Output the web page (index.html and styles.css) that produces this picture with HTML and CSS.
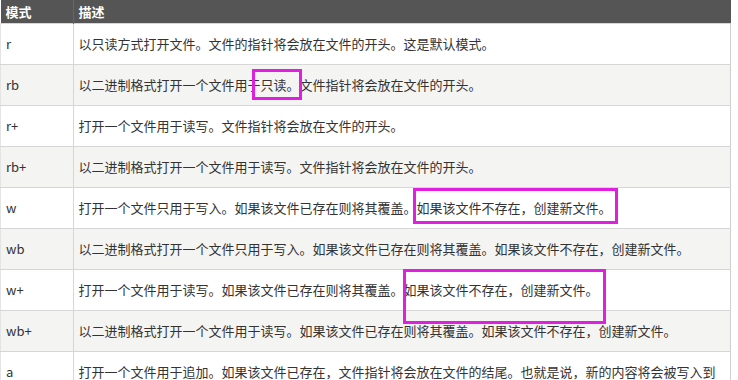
FILE: index.html
```html
<!DOCTYPE html>
<html lang="zh">
<head>
<meta charset="utf-8">
<link rel="stylesheet" href="styles.css">
</head>
<body>
<div class="wrap">
  <table class="modes">
    <thead>
      <tr><th class="c1">模式</th><th>描述</th></tr>
    </thead>
    <tbody>
      <tr><td class="c1">r</td><td>以只读方式打开文件。文件的指针将会放在文件的开头。这是默认模式。</td></tr>
      <tr class="alt"><td class="c1">rb</td><td>以二进制格式打开一个文件用于只读。文件指针将会放在文件的开头。</td></tr>
      <tr><td class="c1">r+</td><td>打开一个文件用于读写。文件指针将会放在文件的开头。</td></tr>
      <tr class="alt"><td class="c1">rb+</td><td>以二进制格式打开一个文件用于读写。文件指针将会放在文件的开头。</td></tr>
      <tr><td class="c1">w</td><td>打开一个文件只用于写入。如果该文件已存在则将其覆盖。如果该文件不存在，创建新文件。</td></tr>
      <tr class="alt"><td class="c1">wb</td><td>以二进制格式打开一个文件只用于写入。如果该文件已存在则将其覆盖。如果该文件不存在，创建新文件。</td></tr>
      <tr><td class="c1">w+</td><td>打开一个文件用于读写。如果该文件已存在则将其覆盖。如果该文件不存在，创建新文件。</td></tr>
      <tr class="alt"><td class="c1">wb+</td><td>以二进制格式打开一个文件用于读写。如果该文件已存在则将其覆盖。如果该文件不存在，创建新文件。</td></tr>
      <tr><td class="c1">a</td><td>打开一个文件用于追加。如果该文件已存在，文件指针将会放在文件的结尾。也就是说，新的内容将会被写入到</td></tr>
    </tbody>
  </table>
  <div class="mark m1"></div>
  <div class="mark m2"></div>
  <div class="mark m3"></div>
</div>
</body>
</html>
```
FILE: styles.css
```css
html, body {
  margin: 0;
  padding: 0;
  background: #fff;
}
body {
  font-family: "Noto Sans CJK SC", "Noto Sans", sans-serif;
  font-size: 13px;
  color: #333;
  overflow: hidden;
}
.wrap {
  position: relative;
  width: 738px;
  height: 380px;
  overflow: hidden;
}
.modes {
  border-collapse: collapse;
  width: 731px;
  table-layout: fixed;
}
.modes th {
  background: #555;
  color: #fff;
  font-weight: bold;
  text-align: left;
  height: 23px;
  padding: 0 5px;
  line-height: 23px;
  border-right: 1px solid #666;
}
.modes th:last-child { border-right: none; }
.modes .c1 { width: 62px; }
.modes td {
  height: 40px;
  padding: 0 5px;
  border: 1px solid #d6d6d6;
  vertical-align: middle;
  white-space: nowrap;
  line-height: 20px;
}
.modes td:first-child { border-left: 1px solid #e4e4e4; }
.modes td:last-child { padding-left: 5px; border-right: 1px solid #cfcfcf; }
.modes tr.alt td { background: #f4f4f2; }
.mark {
  position: absolute;
  border: 3px solid #e11fe0;
  box-sizing: border-box;
}
.m1 { left: 252px; top: 69px; width: 50px; height: 31px; }
.m2 { left: 413px; top: 188px; width: 205px; height: 36px; }
.m3 { left: 403px; top: 269px; width: 203px; height: 55px; }
```
